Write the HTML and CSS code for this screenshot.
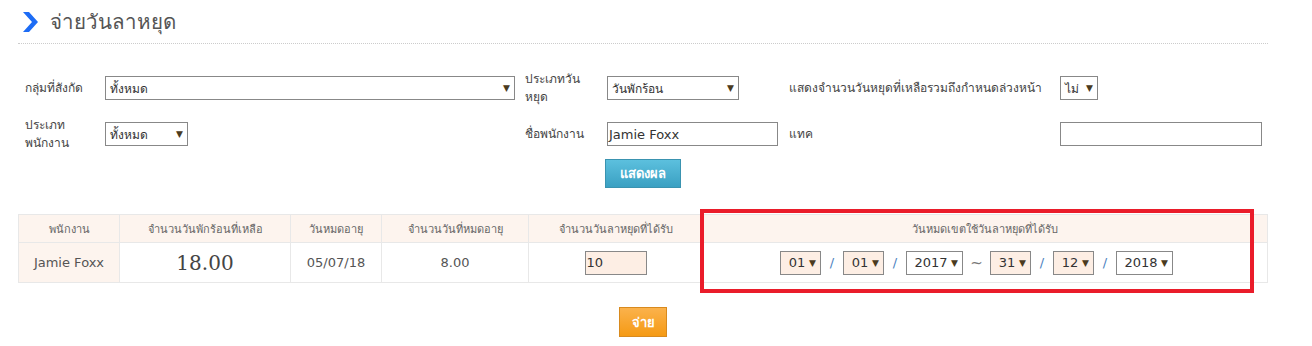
FILE: index.html
```html
<!DOCTYPE html>
<html lang="th">
<head>
    <meta charset="UTF-8">
    <title>จ่ายวันลาหยุด</title>
    <link rel="stylesheet" href="styles.css">
</head>
<body>
<div class="page">

    <div class="titulo">
        <svg class="chevron" width="15" height="20" viewBox="0 0 15 20">
            <polygon points="0,0 6,0 15,10 6,20 0,20 9,10" fill="#1d6cf5"/>
        </svg>
        <h2>จ่ายวันลาหยุด</h2>
    </div>

    <div class="filtros">
        <label>กลุ่มที่สังกัด</label>
        <div class="sel wide"><span>ทั้งหมด</span><i>▼</i></div>
        <label class="medio">ประเภทวัน<br>หยุด</label>
        <div class="sel w132"><span>วันพักร้อน</span><i>▼</i></div>
        <label>แสดงจำนวนวันหยุดที่เหลือรวมถึงกำหนดล่วงหน้า</label>
        <div class="sel w38"><span>ไม่</span><i>▼</i></div>

        <label>ประเภท<br>พนักงาน</label>
        <div class="sel w83"><span>ทั้งหมด</span><i>▼</i></div>
        <label class="medio">ชื่อพนักงาน</label>
        <div class="txt w171">Jamie Foxx</div>
        <label>แทค</label>
        <div class="txt w202"></div>
    </div>

    <div class="centro">
        <button class="btn-azul">แสดงผล</button>
    </div>

    <table class="tabla">
        <tr>
            <th class="c1">พนักงาน</th>
            <th class="c2">จำนวนวันพักร้อนที่เหลือ</th>
            <th class="c3">วันหมดอายุ</th>
            <th class="c4">จำนวนวันที่หมดอายุ</th>
            <th class="c5">จำนวนวันลาหยุดที่ได้รับ</th>
            <th>วันหมดเขตใช้วันลาหยุดที่ได้รับ</th>
        </tr>
        <tr>
            <td>Jamie Foxx</td>
            <td class="grande">18.00</td>
            <td>05/07/18</td>
            <td>8.00</td>
            <td><div class="txt rosa w62">10</div></td>
            <td>
                <div class="fechas">
                    <div class="sel rosa w41"><span>01</span><i>▼</i></div>
                    <b>/</b>
                    <div class="sel rosa w41"><span>01</span><i>▼</i></div>
                    <b>/</b>
                    <div class="sel w57"><span>2017</span><i>▼</i></div>
                    <em>~</em>
                    <div class="sel rosa w41"><span>31</span><i>▼</i></div>
                    <b>/</b>
                    <div class="sel rosa w41"><span>12</span><i>▼</i></div>
                    <b>/</b>
                    <div class="sel w57"><span>2018</span><i>▼</i></div>
                </div>
            </td>
        </tr>
    </table>

    <div class="centro pagar">
        <button class="btn-naranja">จ่าย</button>
    </div>

    <!-- marco rojo de la captura -->
    <div class="marco"></div>
</div>
</body>
</html>
```

FILE: styles.css
```css
body { margin: 0; background: #fff; font-family: Tahoma, "DejaVu Sans", "Noto Sans", sans-serif; font-size: 12px; color: #444; }
.page { position: relative; width: 1250px; padding: 0 0 0 18px; }

.titulo { display: flex; align-items: center; height: 43px; border-bottom: 1px dotted #ccc; }
.chevron { margin-left: 5px; margin-right: 12px; }
.titulo h2 { margin: 0; font-size: 20.5px; font-weight: normal; color: #555; }

.filtros {
    display: grid;
    grid-template-columns: 80px 410px 92px 182px 271px 202px;
    grid-auto-rows: 40px;
    row-gap: 6px;
    align-items: center;
    margin: 24px 0 0 7px;
}
.filtros label { line-height: 18px; color: #444; }
.filtros .medio { padding-left: 10px; }

.sel, .txt {
    box-sizing: border-box;
    height: 24px;
    border: 1px solid #888;
    background: #fff;
    display: flex;
    align-items: center;
    padding: 0 4px;
    font-size: 12px;
    color: #333;
}
.sel span { flex: 1; }
.sel i { font-style: normal; font-size: 9px; color: #4a3a20; }
.txt { font-family: "DejaVu Sans", sans-serif; font-size: 13px; padding: 0 1px; color: #333; }
.wide { width: 410px; }
.w132 { width: 132px; }
.w38 { width: 38px; }
.w83 { width: 83px; }
.w171 { width: 171px; }
.w202 { width: 202px; }
.w62 { width: 62px; }
.w41 { width: 41px; }
.w57 { width: 57px; }
.rosa { background: #fdeee4; }

.centro { display: flex; justify-content: center; }
.btn-azul {
    margin: 5px 0 0 0;
    width: 76px; height: 29px;
    border: 1px solid #3a93b0;
    background: linear-gradient(#5cc0de, #3aa0c2);
    color: #fff; font-family: inherit; font-size: 13px; font-weight: bold;
}

.tabla { margin-top: 26px; width: 1250px; border-collapse: collapse; table-layout: fixed; }
.tabla th, .tabla td { border: 1px solid #e8e8e8; text-align: center; padding: 0; }
.tabla th { height: 27px; background: #fdf4ee; font-weight: normal; color: #666; font-size: 11px; }
.tabla td { height: 39px; color: #555; font-size: 13px; font-family: "DejaVu Sans", sans-serif; }
.tabla td:first-child { background: #fdf4ee; }
.c1 { width: 100px; }
.c2 { width: 170px; }
.c3 { width: 90px; }
.c4 { width: 146px; }
.c5 { width: 173px; }
.grande { font-family: "DejaVu Serif", serif !important; font-size: 20px !important; color: #444 !important; }
.tabla td .txt { margin: 0 auto; font-size: 13px; }

.fechas { display: flex; align-items: center; justify-content: center; padding-right: 17px; }
.fechas .sel { font-family: "DejaVu Sans", sans-serif; font-size: 13px; }
.fechas b { font-weight: normal; color: #4a7fc0; width: 22px; text-align: center; }
.fechas em { font-style: normal; color: #777; width: 27px; text-align: center; font-size: 15px; }

.pagar { margin-top: 24px; }
.btn-naranja {
    width: 48px; height: 30px;
    border: 1px solid #d88a1e;
    background: linear-gradient(#fbb24c, #f59a14);
    color: #fff; font-family: inherit; font-size: 13px; font-weight: bold;
}

.marco { position: absolute; left: 700px; top: 209px; width: 546px; height: 76px; border: 4px solid #ea1c2a; }
```
